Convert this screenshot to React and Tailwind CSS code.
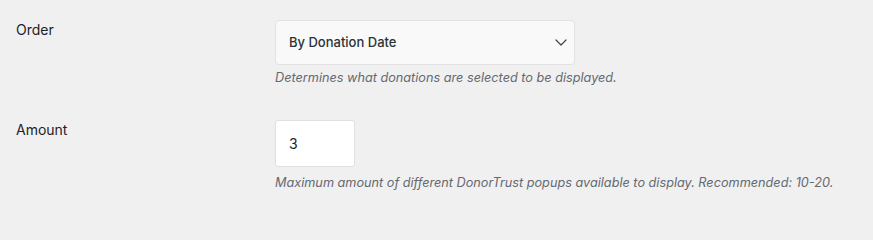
import React from "react";

const font = { fontFamily: "Inter, 'Noto Sans', sans-serif" };

const Row = ({ label, children, className = "" }) => (
  <div className={`flex ${className}`}>
    <div className="w-[275px] shrink-0 pl-4 text-sm leading-5 text-[#1d2327]">
      {label}
    </div>
    <div className="flex flex-col">{children}</div>
  </div>
);

const App = () => {
  return (
    <div className="min-h-screen w-full bg-[#f0f0f1] pt-5" style={font}>
      <Row label="Order">
        <div className="flex h-[45px] w-[300px] items-center justify-between rounded border border-[#e2e2e2] bg-[#f9f9f9] pl-[13px] pr-[7px]">
          <span className="text-[13px] font-medium text-[#2c3338]">
            By Donation Date
          </span>
          <svg width="12" height="7" viewBox="0 0 12 7" fill="none">
            <path
              d="M1 1l5 5 5-5"
              stroke="#3c434a"
              strokeWidth="1.2"
              strokeLinecap="round"
              strokeLinejoin="round"
            />
          </svg>
        </div>
        <p className="mt-1 text-[12.7px] leading-[18px] italic text-[#646970]">
          Determines what donations are selected to be displayed.
        </p>
      </Row>

      <Row label="Amount" className="mt-[33px]">
        <div className="flex h-[47px] w-[80px] items-center rounded-[3px] border border-[#e0e0e0] bg-white pl-[13px] text-sm text-[#1d2327]">
          3
        </div>
        <p className="mt-[7px] text-[12.7px] leading-[18px] italic text-[#646970]">
          Maximum amount of different DonorTrust popups available to display.
          Recommended: 10-20.
        </p>
      </Row>
    </div>
  );
};

export default App;
